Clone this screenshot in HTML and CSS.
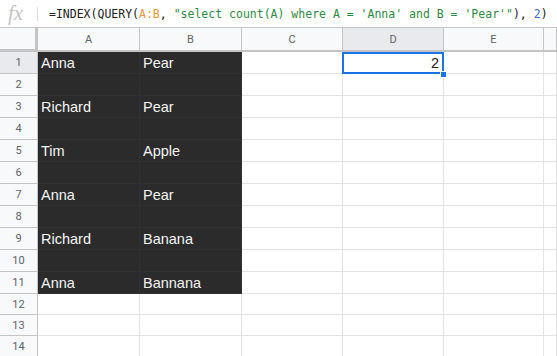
FILE: index.html
```html
<!DOCTYPE html>
<html>
<head>
<meta charset="utf-8">
<link rel="stylesheet" href="styles.css">
</head>
<body>
<div class="formula-bar">
  <span class="fx">fx</span>
  <span class="fx-sep"></span>
  <span class="formula"><span class="f-plain">=INDEX(QUERY(</span><span class="f-ref">A:B</span><span class="f-plain">, </span><span class="f-str">"select count(A) where A = 'Anna' and B = 'Pear'"</span><span class="f-plain">), </span><span class="f-num">2</span><span class="f-plain">)</span></span>
</div>
<div class="sheet">
  <div class="corner"></div>
  <div class="col-head">A</div>
  <div class="col-head">B</div>
  <div class="col-head">C</div>
  <div class="col-head sel">D</div>
  <div class="col-head">E</div>
  <div class="col-head"></div>

  <div class="row-head sel">1</div>
  <div class="cell dark">Anna</div><div class="cell dark">Pear</div><div class="cell"></div>
  <div class="cell num active">2<span class="selection"></span><span class="handle"></span></div><div class="cell"></div><div class="cell"></div>

  <div class="row-head">2</div>
  <div class="cell dark"></div><div class="cell dark"></div><div class="cell"></div><div class="cell"></div><div class="cell"></div><div class="cell"></div>

  <div class="row-head">3</div>
  <div class="cell dark">Richard</div><div class="cell dark">Pear</div><div class="cell"></div><div class="cell"></div><div class="cell"></div><div class="cell"></div>

  <div class="row-head">4</div>
  <div class="cell dark"></div><div class="cell dark"></div><div class="cell"></div><div class="cell"></div><div class="cell"></div><div class="cell"></div>

  <div class="row-head">5</div>
  <div class="cell dark">Tim</div><div class="cell dark">Apple</div><div class="cell"></div><div class="cell"></div><div class="cell"></div><div class="cell"></div>

  <div class="row-head">6</div>
  <div class="cell dark"></div><div class="cell dark"></div><div class="cell"></div><div class="cell"></div><div class="cell"></div><div class="cell"></div>

  <div class="row-head">7</div>
  <div class="cell dark">Anna</div><div class="cell dark">Pear</div><div class="cell"></div><div class="cell"></div><div class="cell"></div><div class="cell"></div>

  <div class="row-head">8</div>
  <div class="cell dark"></div><div class="cell dark"></div><div class="cell"></div><div class="cell"></div><div class="cell"></div><div class="cell"></div>

  <div class="row-head">9</div>
  <div class="cell dark">Richard</div><div class="cell dark">Banana</div><div class="cell"></div><div class="cell"></div><div class="cell"></div><div class="cell"></div>

  <div class="row-head">10</div>
  <div class="cell dark"></div><div class="cell dark"></div><div class="cell"></div><div class="cell"></div><div class="cell"></div><div class="cell"></div>

  <div class="row-head">11</div>
  <div class="cell dark">Anna</div><div class="cell dark">Bannana</div><div class="cell"></div><div class="cell"></div><div class="cell"></div><div class="cell"></div>

  <div class="row-head">12</div>
  <div class="cell"></div><div class="cell"></div><div class="cell"></div><div class="cell"></div><div class="cell"></div><div class="cell"></div>

  <div class="row-head">13</div>
  <div class="cell"></div><div class="cell"></div><div class="cell"></div><div class="cell"></div><div class="cell"></div><div class="cell"></div>

  <div class="row-head">14</div>
  <div class="cell"></div><div class="cell"></div><div class="cell"></div><div class="cell"></div><div class="cell"></div><div class="cell"></div>
</div>
</body>
</html>
```
FILE: styles.css
```css
* { box-sizing: border-box; }
html, body {
  margin: 0;
  padding: 0;
  background: #fff;
  width: 557px;
  height: 356px;
  overflow: hidden;
}
.formula-bar {
  height: 28px;
  border-bottom: 1px solid #c7c7c7;
  display: flex;
  align-items: center;
  background: #fff;
}
.fx {
  font-family: "Liberation Serif", serif;
  font-style: italic;
  font-size: 21px;
  color: #c4c4c4;
  width: 37px;
  padding-left: 8px;
  line-height: 20px;
  margin-top: -2px;
}
.fx-sep {
  width: 1px;
  height: 14px;
  background: #dadce0;
  margin-right: 11px;
}
.formula {
  font-family: "DejaVu Sans Mono", monospace;
  font-size: 11.5px;
  white-space: pre;
  color: #222;
  letter-spacing: 0;
  margin-top: 1px;
}
.f-ref { color: #f0923b; }
.f-str { color: #2f8a43; }
.f-num { color: #3d6ad6; }

.sheet {
  display: grid;
  grid-template-columns: 38px 102px 102px 101px 101px 100px 1fr;
  grid-template-rows: 24px repeat(11, 22px) repeat(3, 21px);
}
.corner {
  background: #f8f9fa;
  border-right: 3px solid #c4c4c4;
  border-bottom: 3px solid #c4c4c4;
}
.col-head {
  background: #f8f9fa;
  border-right: 1px solid #c4c4c4;
  border-bottom: 2px solid #c4c4c4;
  font-family: Roboto, "Liberation Sans", sans-serif;
  font-size: 11px;
  color: #5f6368;
  display: flex;
  align-items: center;
  justify-content: center;
  padding-top: 1px;
}
.col-head.sel, .row-head.sel { background: #e8eaed; }
.row-head {
  background: #f8f9fa;
  border-right: 1px solid #c4c4c4;
  border-bottom: 1px solid #c4c4c4;
  font-family: Roboto, "Liberation Sans", sans-serif;
  font-size: 11px;
  color: #5f6368;
  display: flex;
  align-items: center;
  justify-content: center;
}
.cell {
  border-right: 1px solid #e2e3e3;
  border-bottom: 1px solid #e2e3e3;
  font-family: "Liberation Sans", Arial, sans-serif;
  font-size: 14.5px;
  line-height: 16px;
  color: #222;
  display: flex;
  align-items: flex-end;
  padding: 0 3px 2px 3px;
  white-space: nowrap;
}
.cell.dark {
  background: #2b2b2b;
  border-color: #313131;
  color: #f4f4f4;
}
.cell.num { justify-content: flex-end; }
.cell.active { position: relative; padding-right: 4px; }
.selection {
  position: absolute;
  top: 0;
  left: -1px;
  right: -1px;
  bottom: -1px;
  border: 2px solid #1a73e8;
}
.handle {
  position: absolute;
  width: 7px;
  height: 7px;
  right: -4px;
  bottom: -5px;
  background: #1a73e8;
  border: 1px solid #fff;
}
```
